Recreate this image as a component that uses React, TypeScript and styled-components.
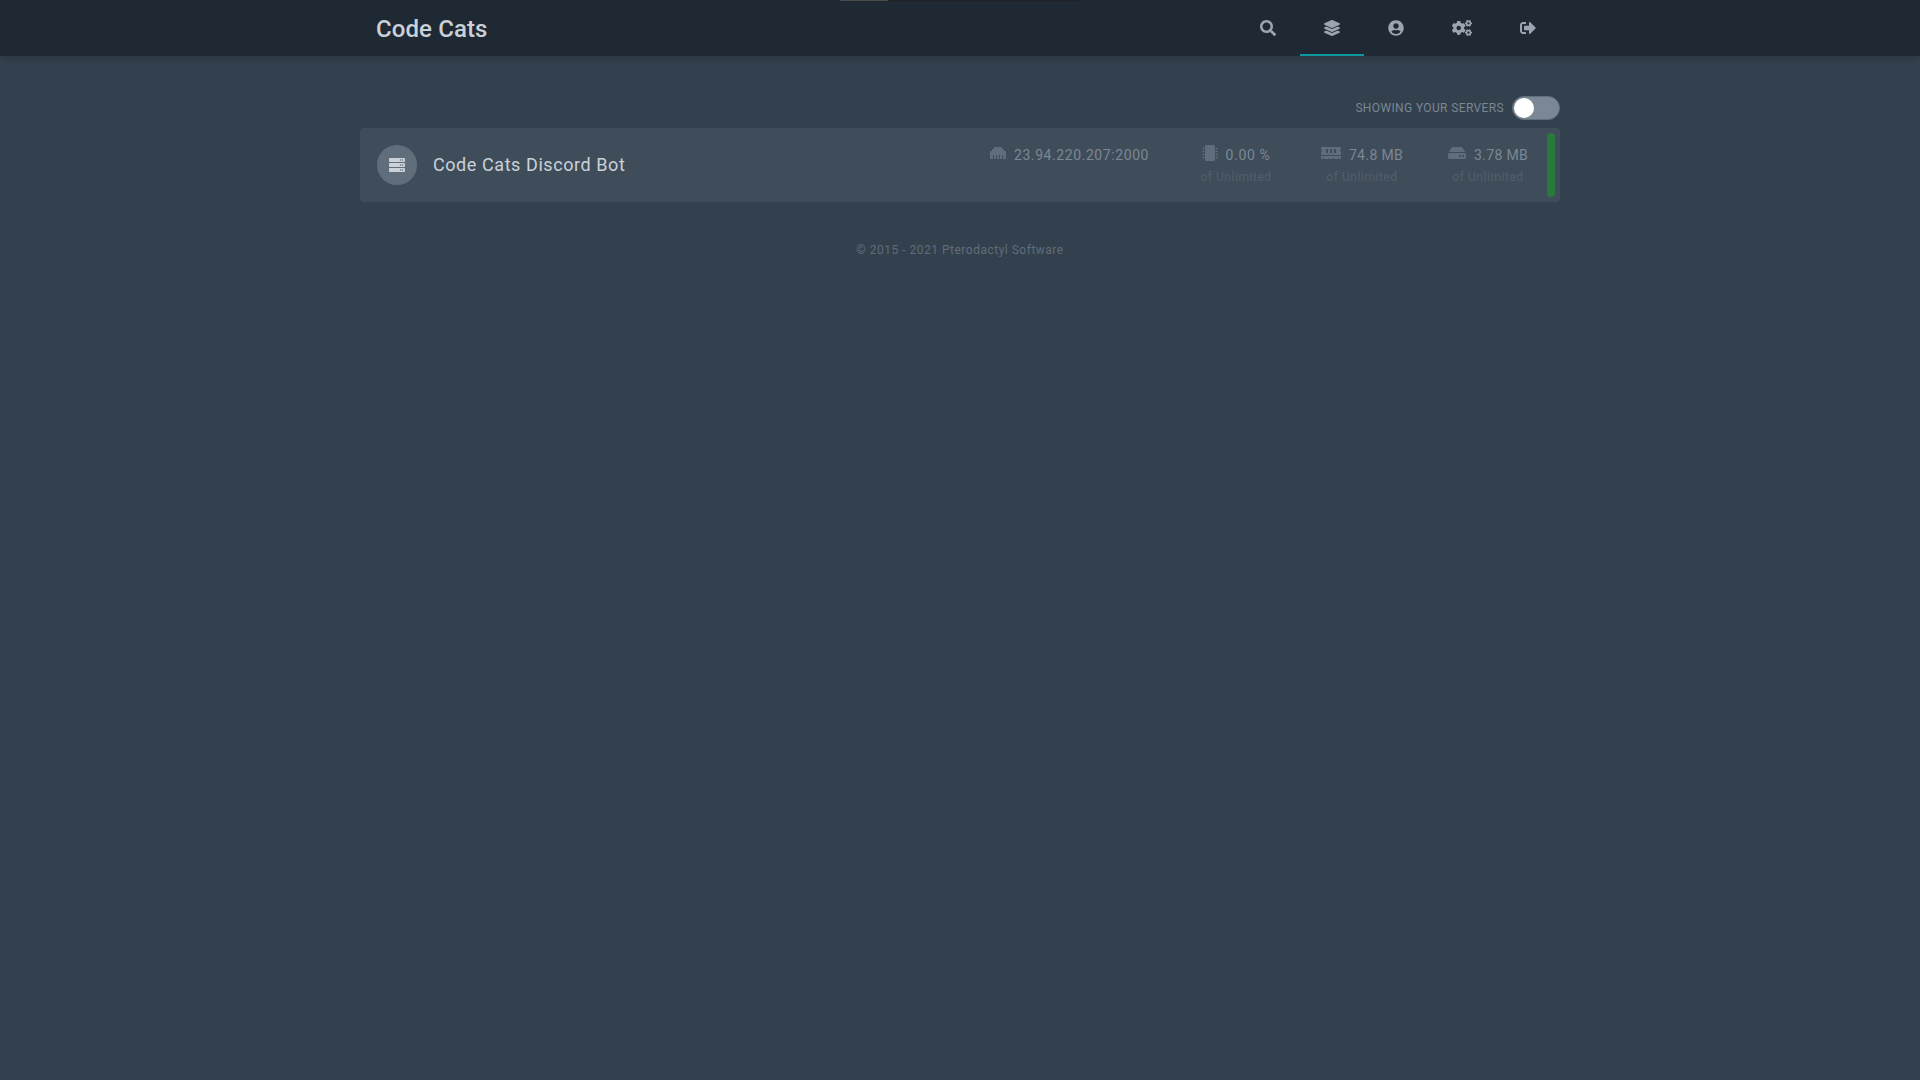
import React from 'react';
import styled, { createGlobalStyle } from 'styled-components';
import {
  FaSearch, FaLayerGroup, FaUserCircle, FaCogs, FaSignOutAlt,
  FaServer, FaEthernet, FaMicrochip, FaMemory, FaHdd,
} from 'react-icons/fa';

const GlobalStyle = createGlobalStyle`
  * { box-sizing: border-box; }
  body {
    margin: 0;
    min-height: 100vh;
    background: #33404d;
    font-family: Roboto, "Liberation Sans", sans-serif;
  }
`;

const Header = styled.header`
  height: 56px;
  background: #1f2933;
  box-shadow: 0 4px 6px -1px rgba(0, 0, 0, 0.1), 0 2px 4px -1px rgba(0, 0, 0, 0.06);
`;

const LoadingTrack = styled.div`
  width: 240px;
  height: 1px;
  margin: 0 auto -1px;
  background: #222325;
`;

const LoadingFill = styled.div`
  width: 48px;
  height: 1px;
  background: #4b4b4a;
`;

const HeaderInner = styled.div`
  width: 1200px;
  height: 56px;
  margin: 0 auto;
  padding-left: 16px;
  display: flex;
  align-items: center;
  justify-content: space-between;
`;

const Brand = styled.a`
  padding-top: 2px;
  font-size: 24px;
  font-weight: 500;
  line-height: 32px;
  letter-spacing: 0.1px;
  color: #cad1d8;
`;

const Nav = styled.nav`
  display: flex;
  height: 100%;
`;

const NavItem = styled.a<{ $active?: boolean; $iconWidth?: number }>`
  display: flex;
  align-items: center;
  padding: 0 24px;
  color: #9aa5b1;
  box-shadow: ${p => (p.$active ? 'inset 0 -2px #0d979e' : 'none')};

  svg { display: block; height: 16px; width: ${p => p.$iconWidth ?? 16}px; }
`;

const Main = styled.main`
  width: 1200px;
  margin: 40px auto 0;
`;

const Filter = styled.div`
  display: flex;
  justify-content: flex-end;
  align-items: center;
  height: 24px;
  margin-bottom: 8px;
`;

const FilterLabel = styled.span`
  margin-right: 8px;
  font-size: 12px;
  letter-spacing: 0.37px;
  text-transform: uppercase;
  color: #7b8794;
`;

const Toggle = styled.div`
  width: 48px;
  height: 24px;
  padding: 1px;
  border: 1px solid #616e7c;
  border-radius: 12px;
  background: #7b8794;
`;

const Knob = styled.div`
  width: 20px;
  height: 20px;
  border-radius: 50%;
  background: #fff;
`;

const ServerRow = styled.a`
  display: flex;
  align-items: center;
  height: 74px;
  padding: 0 5px 0 17px;
  border-radius: 4px;
  background: #3f4d5a;
`;

const ServerBadge = styled.div`
  display: flex;
  align-items: center;
  justify-content: center;
  width: 40px;
  height: 40px;
  margin-right: 16px;
  border-radius: 50%;
  background: #606d7b;
  color: #cad1d8;
`;

const ServerName = styled.p`
  flex: 1;
  margin: 0;
  padding-bottom: 2px;
  font-size: 18px;
  letter-spacing: 0.57px;
  color: #cad1d8;
`;

const Stats = styled.div`
  display: flex;
  gap: 16px;
  height: 40px;
`;

const Stat = styled.div<{ $width: number }>`
  width: ${p => p.$width}px;
`;

const Reading = styled.div<{ $iconWidth: number }>`
  display: flex;
  justify-content: center;
  height: 20px;
  color: #606d7b;

  svg { display: block; flex: none; height: 16px; width: ${p => p.$iconWidth}px; }
`;

const Value = styled.span<{ $tracking: number }>`
  margin-left: 8px;
  font-size: 14px;
  line-height: 20px;
  letter-spacing: ${p => p.$tracking}px;
  white-space: nowrap;
  color: #7b8794;
`;

const Limit = styled.p`
  margin: 4px 0 0;
  font-size: 12px;
  line-height: 16px;
  letter-spacing: 0.55px;
  text-align: center;
  color: #515f6c;
`;

const StatusBar = styled.div`
  width: 8px;
  height: 64px;
  margin-left: 4px;
  border-radius: 4px;
  background: #2b793d;
`;

const Footer = styled.footer`
  margin-top: 40px;
  font-size: 12px;
  line-height: 16px;
  letter-spacing: 0.5px;
  text-align: center;
  color: #606d7b;
`;

const navigation = [
  { icon: FaSearch },
  { icon: FaLayerGroup, active: true },
  { icon: FaUserCircle },
  { icon: FaCogs, iconWidth: 20 },
  { icon: FaSignOutAlt },
];

const stats = [
  { icon: FaEthernet, iconWidth: 16, value: '23.94.220.207:2000', tracking: 0.58, width: 191 },
  { icon: FaMicrochip, iconWidth: 16, value: '0.00 %', tracking: 0.65, limit: 'of Unlimited', width: 110 },
  { icon: FaMemory, iconWidth: 20, value: '74.8 MB', tracking: 0.36, limit: 'of Unlimited', width: 110 },
  { icon: FaHdd, iconWidth: 18, value: '3.78 MB', tracking: 0.36, limit: 'of Unlimited', width: 110 },
];

export default function App() {
  return (
    <>
      <GlobalStyle />
      <Header>
        <LoadingTrack><LoadingFill /></LoadingTrack>
        <HeaderInner>
          <Brand>Code Cats</Brand>
          <Nav>
            {navigation.map(({ icon: Icon, active, iconWidth }, i) => (
              <NavItem key={i} $active={active} $iconWidth={iconWidth}><Icon /></NavItem>
            ))}
          </Nav>
        </HeaderInner>
      </Header>
      <Main>
        <Filter>
          <FilterLabel>Showing your servers</FilterLabel>
          <Toggle><Knob /></Toggle>
        </Filter>
        <ServerRow>
          <ServerBadge><FaServer size={16} /></ServerBadge>
          <ServerName>Code Cats Discord Bot</ServerName>
          <Stats>
            {stats.map(({ icon: Icon, iconWidth, value, tracking, limit, width }) => (
              <Stat key={value} $width={width}>
                <Reading $iconWidth={iconWidth}>
                  <Icon />
                  <Value $tracking={tracking}>{value}</Value>
                </Reading>
                {limit && <Limit>{limit}</Limit>}
              </Stat>
            ))}
          </Stats>
          <StatusBar />
        </ServerRow>
        <Footer>© 2015 - 2021 Pterodactyl Software</Footer>
      </Main>
    </>
  );
}
